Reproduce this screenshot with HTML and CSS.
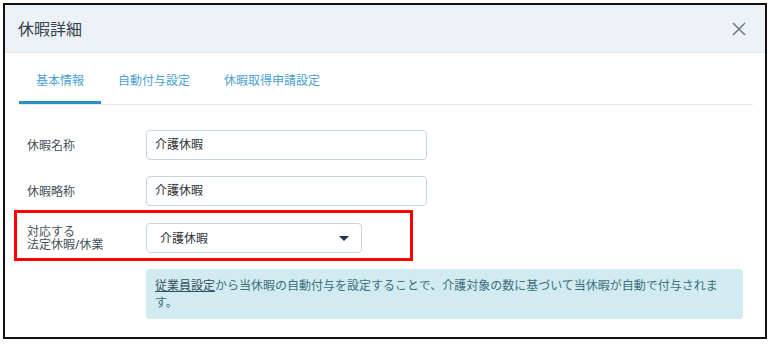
FILE: index.html
```html
<!DOCTYPE html>
<html lang="ja">
<head>
    <meta charset="UTF-8">
    <meta name="viewport" content="width=device-width, initial-scale=1.0">
    <title>休暇詳細</title>
    <link rel="stylesheet" href="styles.css">
</head>
<body>
    <div class="frame">
        <div class="modal-header">
            <h3 class="modal-title">休暇詳細</h3>
            <button class="close" aria-label="閉じる">
                <svg width="14" height="14" viewBox="0 0 14 14">
                    <path d="M1 1 L13 13 M13 1 L1 13" stroke="#6d7c8b" stroke-width="1.6" fill="none"/>
                </svg>
            </button>
        </div>
        <div class="modal-body">
            <ul class="tabs">
                <li class="tab active">基本情報</li>
                <li class="tab">自動付与設定</li>
                <li class="tab">休暇取得申請設定</li>
            </ul>
            <div class="form">
                <div class="row">
                    <label class="label">休暇名称</label>
                    <div class="input">介護休暇</div>
                </div>
                <div class="row">
                    <label class="label">休暇略称</label>
                    <div class="input">介護休暇</div>
                </div>
                <div class="row row-select">
                    <label class="label">対応する<br>法定休暇/休業</label>
                    <div class="select">
                        <span>介護休暇</span>
                        <span class="caret"></span>
                    </div>
                </div>
                <div class="info">
                    <a class="info-link">従業員設定</a>から当休暇の自動付与を設定することで、介護対象の数に基づいて当休暇が自動で付与されます。
                </div>
                <div class="stub"></div>
            </div>
        </div>
        <div class="annotation"></div>
    </div>
</body>
</html>
```

FILE: styles.css
```css
body {
    margin: 0;
    background: #fff;
    font-family: "Noto Sans", "Noto Sans CJK JP", sans-serif;
}
.frame {
    position: relative;
    box-sizing: border-box;
    width: 764px;
    height: 336px;
    margin: 3px 0 0 3px;
    border: 2px solid #111;
    overflow: hidden;
    background: #fff;
}
.modal-header {
    display: flex;
    align-items: center;
    justify-content: space-between;
    height: 47px;
    padding: 0 19px 0 13px;
    background: #edf2f6;
    border-bottom: 1px solid #dfe6ec;
}
.modal-title {
    margin: 0;
    font-size: 16px;
    font-weight: normal;
    color: #35404b;
    line-height: 20px;
}
.close {
    display: flex;
    padding: 0;
    border: none;
    background: none;
}
.modal-body {
    padding: 0 12px 0 14px;
}
.tabs {
    display: flex;
    list-style: none;
    margin: 0;
    padding: 19px 0 0;
    border-bottom: 1px solid #e4e9ee;
}
.tab {
    padding: 0 17px 11px;
    font-size: 12px;
    line-height: 18px;
    color: #4a9fd2;
    border-bottom: 3px solid transparent;
}
.tab.active {
    border-bottom-color: #2a8ecb;
}
.form {
    padding: 25px 10px 0 8px;
}
.row {
    display: flex;
    align-items: center;
    margin-bottom: 16px;
}
.row-select {
    margin-top: 17px;
}
.label {
    width: 119px;
    flex-shrink: 0;
    font-size: 12px;
    line-height: 13px;
    color: #46505b;
}
.input {
    box-sizing: border-box;
    width: 281px;
    height: 30px;
    padding: 0 8px;
    border: 1px solid #c9d5df;
    border-radius: 4px;
    font-size: 12px;
    line-height: 28px;
    color: #2c333a;
}
.select {
    box-sizing: border-box;
    display: flex;
    align-items: center;
    justify-content: space-between;
    width: 216px;
    height: 30px;
    padding: 0 12px 0 13px;
    border: 1px solid #c9d5df;
    border-radius: 4px;
    font-size: 12px;
    color: #2c333a;
}
.caret {
    width: 0;
    height: 0;
    border-left: 5px solid transparent;
    border-right: 5px solid transparent;
    border-top: 5px solid #1f3249;
}
.info {
    margin: 0 0 0 119px;
    padding: 8px 12px 8px 9px;
    background: #d2ebf0;
    border-radius: 4px;
    font-size: 12px;
    line-height: 17px;
    color: #3b6f7d;
}
.info-link {
    color: #34505c;
    text-decoration: underline;
}
.stub {
    width: 78px;
    height: 30px;
    margin: 18px 0 0 121px;
    background: #e9edf0;
    border-top: 1px solid #cfd6dc;
    border-radius: 4px;
}
.annotation {
    position: absolute;
    left: 9px;
    top: 205px;
    box-sizing: border-box;
    width: 399px;
    height: 51px;
    border: 3px solid #ff0000;
}
```
